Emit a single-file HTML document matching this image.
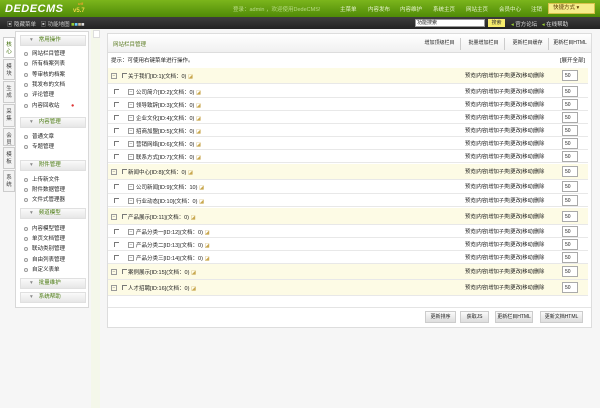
<!DOCTYPE html>
<html><head><meta charset="utf-8"><style>
*{margin:0;padding:0;box-sizing:border-box}
body{width:600px;height:408px;overflow:hidden;background:#f6f6f6;font-family:"Liberation Sans","Noto Sans CJK SC",sans-serif;font-size:5.5px;color:#222;position:relative}
.a{position:absolute;white-space:nowrap}
#top{left:0;top:0;width:600px;height:17px;background:linear-gradient(#7bb51c,#4f8a07)}
#bar{left:0;top:17px;width:600px;height:12px;background:linear-gradient(#3d3d3d,#232323)}
.nav{color:#e8f5d0;font-size:5.5px;top:5px}
.tab{left:3px;width:12px;background:#f3f3f3;border:1px solid #ccc;color:#444;font-size:5.5px;text-align:center;line-height:7px;padding-top:4px}
#menu{left:15px;top:31px;width:74px;height:277px;background:#fff;border:1px solid #d8d8d8}
.h{left:4px;width:66px;height:11px;background:linear-gradient(#fafafa,#e6e6e6);border:1px solid #e0e0e0;color:#4a7a10;font-size:5.5px;line-height:9px;padding-left:9px}
.h:before{content:"▾";color:#888;margin-right:6px}
.mi{left:8px;color:#222;font-size:5.5px}
.mi:before{content:"";display:inline-block;width:2px;height:2px;border:1px solid #999;border-radius:2px;margin-right:4px;vertical-align:middle}
#main{left:107px;top:33px;width:485px;height:295px;background:#fff;border:1px solid #ddd}
.row{left:1px;width:480px;border-bottom:1px solid #e8e8e8}
.y{background:#fdfbe5}
.inp{width:16px;height:11px;border:1px solid #aaa;background:#fff;font-size:5px;padding:2px}
.cb{width:5px;height:5px;border-left:1px solid #777;border-top:1px solid #777}
.pl{width:6px;height:6px;border:1px solid #999;font-size:5px;line-height:4px;text-align:center;color:#777}
.btn{height:12px;background:linear-gradient(#fafafa,#ddd);border:1px solid #ccc;font-size:5px;line-height:10px;text-align:center;color:#222}
</style></head><body>
<div class="a" id="top"></div>
<div class="a" style="left:5px;top:3px;font:italic bold 11px 'Liberation Sans';color:#fff;letter-spacing:0.5px">DEDECMS</div>
<div class="a" style="left:73px;top:8px;font:bold 6px 'Liberation Sans';color:#f2d84a">v5.7</div>
<div class="a" style="left:78px;top:1px;font:bold 4px 'Liberation Sans';color:#f2a030">utf</div>
<div class="a nav" style="left:233px;color:#b9dc86">登录：admin ，欢迎使用DedeCMS!</div>
<div class="a nav" style="left:340px">主菜单</div>
<div class="a nav" style="left:368px">内容发布</div>
<div class="a nav" style="left:400px">内容维护</div>
<div class="a nav" style="left:433px">系统主页</div>
<div class="a nav" style="left:466px">网站主页</div>
<div class="a nav" style="left:499px">会员中心</div>
<div class="a nav" style="left:531px">注销</div>
<div class="a" style="left:548px;top:3px;width:47px;height:11px;background:#f6ec8c;border:1px solid #d8c24a;color:#5a3a00;font-size:5.5px;line-height:9px;padding-left:4px">快捷方式 ▾</div>
<div class="a" id="bar"></div>
<div class="a" style="left:7px;top:20px;color:#ccc;font-size:5.5px">▣ 隐藏菜单 &nbsp;&nbsp;▣ 功能地图 <span style="color:#9c3">■</span><span style="color:#6cf">■</span><span style="color:#cb9">■</span><span style="color:#ddd">■</span></div>
<div class="a" style="left:415px;top:19px;width:70px;height:8px;background:#fff;border:1px solid #999;font-size:5px;line-height:6px;padding-left:1px">功能搜索</div>
<div class="a" style="left:488px;top:19px;width:17px;height:8px;background:#f6ec6c;font-size:5px;line-height:8px;text-align:center;color:#333">搜索</div>
<div class="a" style="left:511px;top:20px;color:#ddd;font-size:5.5px"><span style="color:#9c3">◂</span> 官方论坛 &nbsp;&nbsp;<span style="color:#9c3">◂</span> 在线帮助</div>
<div class="a" style="left:91px;top:29px;width:9px;height:379px;background:#f4f7ea"></div>
<div class="a" style="left:93px;top:30px;width:7px;height:8px;background:#fff;border:1px solid #ddd"></div>
<div class="a tab" style="top:37px;height:21px;background:#fff;color:#3a6a00">核<br>心</div>
<div class="a tab" style="top:59px;height:21px">模<br>块</div>
<div class="a tab" style="top:81px;height:22px">生<br>成</div>
<div class="a tab" style="top:104px;height:23px">采<br>集</div>
<div class="a tab" style="top:128px;height:18px">会<br>员</div>
<div class="a tab" style="top:147px;height:22px">模<br>板</div>
<div class="a tab" style="top:170px;height:22px">系<br>统</div>
<div class="a" id="menu">
<div class="a h" style="top:3px">常用操作</div>
<div class="a mi" style="top:17px">网站栏目管理</div>
<div class="a mi" style="top:27px">所有档案列表</div>
<div class="a mi" style="top:38px">等审核的档案</div>
<div class="a mi" style="top:48px">我发布的文档</div>
<div class="a mi" style="top:58px">评论管理</div>
<div class="a mi" style="top:69px">内容回收站 <span style="color:#d33;margin-left:10px">●</span></div>
<div class="a h" style="top:85px">内容管理</div>
<div class="a mi" style="top:100px">普通文章</div>
<div class="a mi" style="top:110px">专题管理</div>
<div class="a h" style="top:128px">附件管理</div>
<div class="a mi" style="top:143px">上传新文件</div>
<div class="a mi" style="top:153px">附件数据管理</div>
<div class="a mi" style="top:163px">文件式管理器</div>
<div class="a h" style="top:176px">频道模型</div>
<div class="a mi" style="top:192px">内容模型管理</div>
<div class="a mi" style="top:202px">单页文档管理</div>
<div class="a mi" style="top:212px">联动类别管理</div>
<div class="a mi" style="top:223px">自由列表管理</div>
<div class="a mi" style="top:233px">自定义表单</div>
<div class="a h" style="top:246px">批量维护</div>
<div class="a h" style="top:260px">系统帮助</div>
</div>
<div class="a" id="main">
<div class="a" style="left:0;top:0;width:483px;height:19px;background:linear-gradient(#fff,#f0f0f0);border-bottom:1px solid #ddd"></div>
<div class="a" style="left:5px;top:6px;color:#5a7a20;font-size:5.5px">网站栏目管理</div>
<div class="a btn" style="left:311px;top:4px;width:42px;background:none;border:none;border-right:1px solid #ccc">增加顶级栏目</div>
<div class="a btn" style="left:355px;top:4px;width:42px;background:none;border:none;border-right:1px solid #ccc">批量增加栏目</div>
<div class="a btn" style="left:399px;top:4px;width:42px;background:none;border:none;border-right:1px solid #ccc">更新栏目缓存</div>
<div class="a btn" style="left:442px;top:4px;width:40px;background:none;border:none">更新栏目HTML</div>
<div class="a" style="left:3px;top:22px">提示：可使用右键菜单进行操作。</div>
<div class="a" style="right:6px;top:22px">[展开全部]</div>
</div>
<div id="rows"></div>
<script>
var R=[[68,16,1,"关于我们[ID:1](文档：0)"],[85,13,0,"公司简介[ID:2](文档：0)"],[98,13,0,"领导致辞[ID:3](文档：0)"],[111,13,0,"企业文化[ID:4](文档：0)"],[124,13,0,"招商加盟[ID:5](文档：0)"],[137,13,0,"营销网络[ID:6](文档：0)"],[150,13,0,"联系方式[ID:7](文档：0)"],[164,16,1,"新闻中心[ID:8](文档：0)"],[180,14,0,"公司新闻[ID:9](文档：10)"],[194,13,0,"行业动态[ID:10](文档：0)"],[208,17,1,"产品展示[ID:11](文档：0)"],[225,13,0,"产品分类一[ID:12](文档：0)"],[238,13,0,"产品分类二[ID:13](文档：0)"],[251,13,0,"产品分类三[ID:14](文档：0)"],[264,16,1,"案例展示[ID:15](文档：0)"],[280,16,1,"人才招聘[ID:16](文档：0)"]];
var h="";R.forEach(function(r){var y=r[0],ht=r[1],t=r[2];var ty=y+ht/2-3;
h+='<div class="a row'+(t?' y':'')+'" style="left:108px;top:'+y+'px;height:'+ht+'px;width:480px"></div>';
if(t){h+='<div class="a pl" style="left:111px;top:'+(ty)+'px">−</div><div class="a cb" style="left:122px;top:'+(ty)+'px"></div><div class="a" style="left:128px;top:'+(ty-1)+'px">'+r[3]+' <span style="color:#c9a850">◪</span></div>';}
else{h+='<div class="a cb" style="left:114px;top:'+(ty)+'px"></div><div class="a pl" style="left:128px;top:'+(ty)+'px">−</div><div class="a" style="left:136px;top:'+(ty-1)+'px">'+r[3]+' <span style="color:#c9a850">◪</span></div>';}
h+='<div class="a" style="left:465px;top:'+(ty-1)+'px;font-size:5.2px;color:#111">预览|内容|增加子类|更改|移动|删除</div>';
h+='<div class="a inp" style="left:562px;top:'+(y+ht/2-6)+'px">50</div>';});
h+='<div class="a btn" style="left:425px;top:311px;width:31px">更新排序</div><div class="a btn" style="left:460px;top:311px;width:29px">获取JS</div><div class="a btn" style="left:495px;top:311px;width:38px">更新栏目HTML</div><div class="a btn" style="left:540px;top:311px;width:43px">更新文档HTML</div>';
h+='<div class="a" style="left:108px;top:307px;width:483px;height:1px;background:#e4e4e4"></div>';
document.getElementById("rows").innerHTML=h;
</script>
</body></html>
